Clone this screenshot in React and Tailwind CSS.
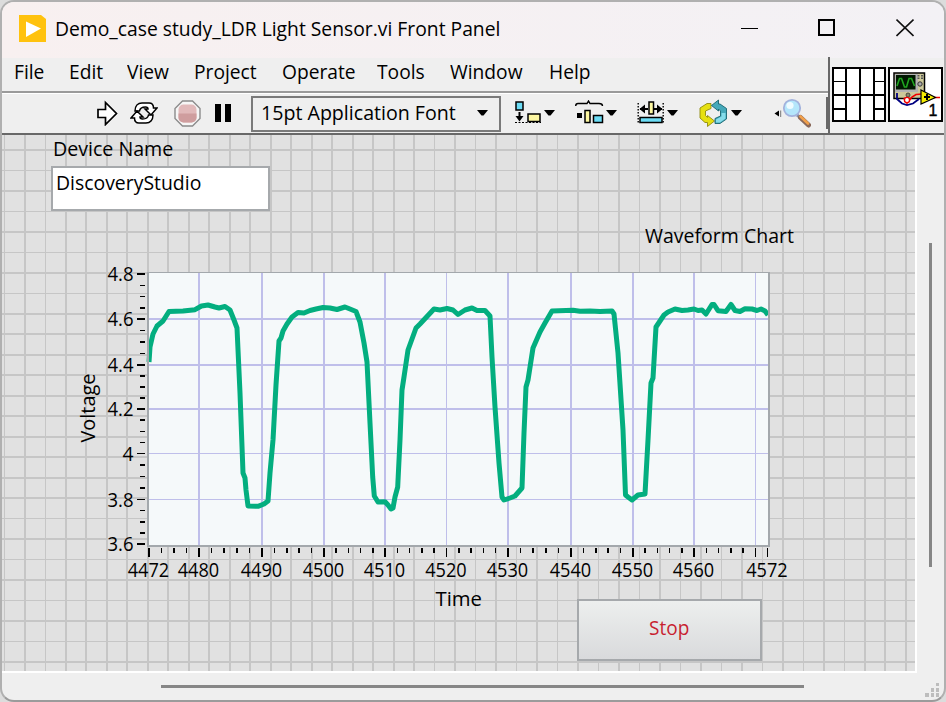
import React from 'react';
import clsx from 'clsx';

const MENU = [
  { label: 'File', width: 'w-[55px]' },
  { label: 'Edit', width: 'w-[58px]' },
  { label: 'View', width: 'w-[67px]' },
  { label: 'Project', width: 'w-[88px]' },
  { label: 'Operate', width: 'w-[95px]' },
  { label: 'Tools', width: 'w-[73px]' },
  { label: 'Window', width: 'w-[99px]' },
  { label: 'Help', width: 'w-[60px]' },
];

// value ticks of the chart, in plot pixels
const Y_TICKS = [
  { label: '4.8', y: 274 },
  { label: '4.6', y: 319 },
  { label: '4.4', y: 365 },
  { label: '4.2', y: 409 },
  { label: '4', y: 453.5 },
  { label: '3.8', y: 499.5 },
  { label: '3.6', y: 544 },
];

const X_TICKS = [
  { label: '4472', x: 149 },
  { label: '4480', x: 199 },
  { label: '4490', x: 262 },
  { label: '4500', x: 324 },
  { label: '4510', x: 385 },
  { label: '4520', x: 446.5 },
  { label: '4530', x: 508 },
  { label: '4540', x: 571 },
  { label: '4550', x: 633 },
  { label: '4560', x: 694 },
  { label: '', x: 755.5 },
  { label: '4572', x: 767.5 },
];

const TRACE = [
  [149, 362], [150, 347], [153, 334], [157, 326], [163, 321], [169, 311.5], [183, 311], [195, 309.7],
  [201.5, 306], [208, 305], [215, 307], [219, 308], [225, 306.5], [230, 310], [234, 320], [237, 328],
  [240, 393], [243, 473], [245, 478], [246, 490], [248, 506], [258, 506.3], [264, 504], [268, 501],
  [270, 473], [273, 440], [276, 385], [279, 341], [281, 338], [283, 331], [287, 324], [292, 317],
  [298, 312.5], [304, 313], [310, 310.5], [316, 309], [323, 307.5], [330, 308], [337, 309.5],
  [345, 307], [350, 309], [356, 311.5], [360, 322], [364, 343], [367, 362], [370, 423], [372.7, 477],
  [374.3, 496], [378, 502], [385, 501.7], [388, 505], [391, 509], [393, 508], [395, 497], [397.7, 487],
  [400, 440], [402, 390], [404, 377], [408, 350], [416, 328], [420, 324], [434, 309], [440, 310],
  [447, 308.5], [453, 310], [458, 314.5], [465, 310], [472, 308], [477, 310.5], [485, 310.5],
  [490, 316], [492, 357], [495, 407], [499, 463], [502, 497], [504, 500], [510, 498], [515, 496],
  [522, 488], [524, 433], [526, 387], [528, 380], [533, 348], [540, 332], [545, 323], [552, 311],
  [573, 310.3], [580, 311.3], [590, 311], [600, 311.5], [612, 311], [614, 314], [618, 353], [623, 430],
  [625.5, 495], [628, 497], [632, 500], [638, 495], [645, 494], [648, 440], [651, 383], [653, 378],
  [656, 327], [660, 321], [664, 315], [668, 312], [675, 309], [682, 310.5], [688, 310], [694, 309],
  [698, 310.5], [702, 310], [706, 314], [712, 304.5], [714, 304.5], [718, 310.7], [726, 311.5],
  [731, 304.5], [735, 310.5], [740, 311.5], [745, 308.8], [752, 309], [757, 310.5], [761, 309],
  [765, 311], [768, 315],
];

const GRID_X = Array.from({ length: 45 }, (_, i) => 4.4 + i * 20.487);
const GRID_Y = Array.from({ length: 26 }, (_, i) => 150 + i * 20.48);

const Text = ({ className, color = 'text-black', children }) => (
  <span className={clsx('inline-block whitespace-nowrap text-[20px] leading-[26px]', color, className)}>
    {children}
  </span>
);

const Caret = ({ className }) => (
  <svg className={clsx('h-[6px] w-[11px] shrink-0', className)} viewBox="0 0 11 6">
    <path d="M0 0H11L6.5 5.5H4.5Z" fill="#000" />
  </svg>
);

const TitleBar = () => (
  <div className="flex h-[57px] shrink-0 items-center bg-gradient-to-r from-[#f8f0f0] to-[#f3f1f5] pb-[3px] pl-[17px]">
    <svg className="h-[27px] w-[27px]" viewBox="0 0 27 27">
      <path d="M0 0H22L27 4V27H0Z" fill="#ffc20e" />
      <path d="M7 6.5L22 13.5L7 22Z" fill="#fff" />
    </svg>
    <Text className="ml-[9px] mt-[1px] w-[480px] origin-left scale-x-[0.965]">Demo_case study_LDR Light Sensor.vi Front Panel</Text>
    <div className="ml-auto flex items-center pr-[30px]">
      <svg className="h-[20px] w-[17px]" viewBox="0 0 17 20" shapeRendering="crispEdges">
        <path d="M0 10.5H17" stroke="#000" />
      </svg>
      <svg className="ml-[60px] h-[20px] w-[17px]" viewBox="0 0 17 20">
        <rect x="1" y="2" width="15" height="15" fill="none" stroke="#000" strokeWidth="2" />
      </svg>
      <svg className="ml-[61px] h-[20px] w-[18px]" viewBox="0 0 18 20">
        <path d="M0.5 1.5L17.5 18M17.5 1.5L0.5 18" stroke="#111" strokeWidth="1.6" />
      </svg>
    </div>
  </div>
);

const MenuBar = () => (
  <div className="flex h-[34px] items-center pb-[3px] pl-[12px]">
    {MENU.map((item) => (
      <button key={item.label} className={clsx('flex shrink-0', item.width)}>
        <Text className="origin-left scale-x-[0.96]">{item.label}</Text>
      </button>
    ))}
  </div>
);

const RunIcon = () => (
  <svg className="h-[26px] w-[21px] shrink-0" viewBox="0 0 21 26">
    <path d="M1 9.500H8.500V2.500L19.500 13.500L8.500 24.500V17.500H1Z" fill="#fff" stroke="#000" strokeWidth="1.7" />
  </svg>
);

const RunContinuousIcon = () => (
  <svg className="ml-[12px] h-[24px] w-[28px] shrink-0" viewBox="0 0 28 24">
    <path
      d="M5 10C5 5 8 2 12 2H19C22 2 23.500 4 23.500 7H27L21 14L15 8H18C18 6.500 17 6 15.500 6C12 6 10 7 9.500 10Z"
      fill="#fff" stroke="#000" strokeWidth="1.5"
    />
    <path
      d="M23 14C23 19 20 22 16 22H9C6 22 4.500 20 4.500 17H1L7 10L13 16H10C10 17.500 11 18 12.500 18C16 18 18 17 18.500 14Z"
      fill="#fff" stroke="#000" strokeWidth="1.5"
    />
  </svg>
);

const AbortIcon = () => (
  <svg className="ml-[16px] h-[27px] w-[27px] shrink-0" viewBox="0 0 27 27">
    <path d="M8.500 1H18.500L26 8.500V18.500L18.500 26H8.500L1 18.500V8.500Z" fill="#f6f6f6" stroke="#8b8b8b" strokeWidth="1.4" />
    <rect x="4.500" y="4.500" width="18" height="18" rx="5" fill="#e1b9ba" />
    <path d="M4.500 13.500H22.500V17.500A5 5 0 0 1 17.500 22.500H9.500A5 5 0 0 1 4.500 17.500Z" fill="#cf9d9e" />
  </svg>
);

const AlignIcon = () => (
  <svg className="ml-[14px] h-[26px] w-[26px] shrink-0" viewBox="0 0 26 26">
    <rect x="1" y="2" width="7" height="8" fill="#6cdcf5" stroke="#000" strokeWidth="1.500" />
    <path d="M4.500 12V18" stroke="#000" strokeWidth="2" />
    <path d="M0.500 16H8.500L4.500 21.500Z" fill="#000" />
    <rect x="13" y="14" width="12" height="7.500" fill="#fdf7a1" stroke="#000" strokeWidth="1.500" />
    <path d="M0 22.500H26" stroke="#000" strokeWidth="1.200" strokeDasharray="2 1.500" />
  </svg>
);

const DistributeIcon = () => (
  <svg className="ml-[20px] h-[26px] w-[29px] shrink-0" viewBox="0 0 29 26">
    <path d="M0.700 6C0.700 4 2 3.500 3 3.500H12L13.500 1L15 3.500H24C26 3.500 27.500 4 27.500 6" fill="none" stroke="#000" strokeWidth="1.400" />
    <rect x="2" y="13" width="5" height="5" fill="#000" />
    <rect x="10" y="10.500" width="5" height="12" fill="#fdf7a1" stroke="#000" strokeWidth="1.500" />
    <rect x="18.500" y="15.500" width="9" height="7" fill="#6cdcf5" stroke="#000" strokeWidth="1.500" />
  </svg>
);

const ResizeIcon = () => (
  <svg className="ml-[20px] h-[26px] w-[28px] shrink-0" viewBox="0 0 28 26">
    <path d="M1.200 3V24M26.200 3V24" stroke="#000" strokeWidth="1.400" strokeDasharray="1.500 1.500" />
    <path d="M3 9H11M17 9H25" stroke="#000" strokeWidth="2" />
    <path d="M2.500 9L8 4.500V13.500ZM25.500 9L20 4.500V13.500Z" fill="#000" />
    <rect x="12" y="2" width="4.500" height="12" fill="#fdf7a1" stroke="#000" strokeWidth="1.500" />
    <rect x="3" y="17.500" width="22" height="5" fill="#6cdcf5" stroke="#000" strokeWidth="1.500" />
  </svg>
);

const ReorderIcon = () => (
  <svg className="ml-[21px] h-[29px] w-[29px] shrink-0" viewBox="0 0 29 29">
    <path
      d="M12 4.500H8L1 9V19L6 23.500H8.500V27.500L15.500 22L8.500 16.500V18.500L6.500 16.500V12L12 9.500Z"
      fill="#e6e012" stroke="#8f8a10" strokeWidth="0.900"
    />
    <path
      d="M16 24.500H21L27.500 20V9.500L21 5H19.500V1L12.500 6.500L19.500 12V10L21.500 12V17L16 19.500Z"
      fill="#45a9ba" stroke="#17646f" strokeWidth="0.900"
    />
    <path d="M22.500 14H26.500V19.500L21 23.500H17V20.500L22.500 17.500Z" fill="#86dcea" />
  </svg>
);

const SearchIcon = () => (
  <svg className="ml-[32px] h-[30px] w-[37px] shrink-0" viewBox="0 0 37 30">
    <path d="M0.500 15.500L5 12.500V18.500Z" fill="#000" />
    <path d="M6.700 12.500V19" stroke="#777" />
    <path d="M23 17L27 20" stroke="#8a93a5" strokeWidth="3" />
    <path d="M26.500 19.500L34.500 27" stroke="#8a6a5c" strokeWidth="5" strokeLinecap="round" />
    <path d="M26.500 18.500L34 25.500" stroke="#f2a04a" strokeWidth="2.600" strokeLinecap="round" />
    <circle cx="18" cy="10" r="8.200" fill="#b4e6fb" stroke="#a3b2dc" strokeWidth="1.800" />
    <circle cx="16" cy="7.500" r="3.600" fill="#eefbff" />
  </svg>
);

const Toolbar = () => (
  <div className="flex h-[40px] items-center pl-[95px]">
    <RunIcon />
    <RunContinuousIcon />
    <AbortIcon />
    <div className="ml-[14px] flex gap-[4px]">
      <div className="h-[18px] w-[6px] bg-black" />
      <div className="h-[18px] w-[6px] bg-black" />
    </div>
    <div className="ml-[20px] mt-[1px] flex h-[36px] w-[250px] shrink-0 items-center justify-between border-2 border-[#7a7a7a] pb-[2px] pl-[8px] pr-[11px]">
      <Text className="w-[200px] origin-left scale-x-[0.98]">15pt Application Font</Text>
      <Caret />
    </div>
    <AlignIcon />
    <Caret className="ml-[3px]" />
    <DistributeIcon />
    <Caret className="ml-[2px]" />
    <ResizeIcon />
    <Caret className="ml-[2px]" />
    <ReorderIcon />
    <Caret className="ml-[3px]" />
    <SearchIcon />
    <div className="ml-auto h-[32px] w-[2px] shrink-0 bg-[#686868]" />
  </div>
);

const ConnectorPane = () => (
  <svg className="h-[55px] w-[54px]" viewBox="0 0 54 55" shapeRendering="crispEdges">
    <rect x="1" y="1" width="52" height="53" fill="#fff" stroke="#000" strokeWidth="2" />
    <path d="M14 0V55M28 0V55M42 0V55M0 28H54" stroke="#000" strokeWidth="2" fill="none" />
    <path d="M0 14.500H14M42 14.500H54" stroke="#000" strokeWidth="1" />
    <path d="M0 42H14M42 42H54" stroke="#000" strokeWidth="2" />
  </svg>
);

const ViIcon = () => (
  <svg className="h-[55px] w-[55px]" viewBox="0 0 55 55">
    <rect x="1" y="1" width="53" height="53" fill="#fff" stroke="#000" strokeWidth="2" />
    <rect x="6" y="6" width="30.500" height="25.500" fill="#cdc99a" stroke="#000" strokeWidth="1.500" />
    <rect x="7" y="7" width="23" height="18" fill="#b3b3b3" />
    <rect x="8" y="8" width="19.500" height="14.500" fill="#001800" />
    <path d="M9 19L11.500 11.500H13.500L16.500 20H18.500L21 11.500H23.500L26.500 19" fill="none" stroke="#1fa51f" strokeWidth="1.600" />
    <path d="M30.500 8V12M34 8V12" stroke="#555" strokeWidth="2" strokeDasharray="1.500 1" />
    <circle cx="32" cy="17" r="2.200" fill="#aaa" stroke="#333" />
    <circle cx="20" cy="28" r="2" fill="#8a8a6a" stroke="#333" strokeWidth="0.800" />
    <path d="M9 26V32L14 36.500L19 38L25 36.500L31 32" fill="none" stroke="#000080" strokeWidth="1.800" />
    <path d="M16 31L19 36L24 30L28 27.500L34 27M46 30.500H52" fill="none" stroke="#f00000" strokeWidth="1.600" />
    <circle cx="19" cy="33" r="2.600" fill="#fff" stroke="#f00000" strokeWidth="1.400" />
    <path d="M33 23L47.500 30.500L33 37Z" fill="#f6ee00" stroke="#000" strokeWidth="1.200" />
    <path d="M36 30H42M39 27V33" stroke="#000" strokeWidth="2" />
    <text x="40.500" y="49" fontSize="16" fontFamily="Liberation Sans, sans-serif" stroke="#000" strokeWidth="0.400">1</text>
  </svg>
);

const Chart = () => (
  <svg
    className="absolute left-[70px] top-[125px] h-[360px] w-[730px]"
    viewBox="72 260 730 360"
    fontFamily="Open Sans, sans-serif"
    fontSize="19.500"
  >
    <rect x="148" y="273" width="621" height="272" fill="#f5f9fa" />
    <g stroke="#bfbfea" strokeWidth="1.700" shapeRendering="crispEdges">
      {Y_TICKS.slice(1, -1).map((t) => <path key={t.y} d={`M149 ${t.y}H768`} />)}
      {X_TICKS.slice(1, -1).map((t) => <path key={t.x} d={`M${t.x} 273V545`} />)}
    </g>
    <polyline points={TRACE.map((p) => p.join(',')).join(' ')} fill="none" stroke="#03ae7f" strokeWidth="5" strokeLinejoin="round" />
    <g fill="none" stroke="#a3a8ac" shapeRendering="crispEdges">
      <path d="M148 272.500H769" strokeWidth="1" />
      <path d="M148 272V547M769 272V547M147 546H770" strokeWidth="2" />
    </g>
    {Y_TICKS.map((t, i) => (
      <g key={t.y}>
        <text x="133.500" y={t.y + 7} textAnchor="end" textLength={t.label.length > 1 ? 26 : 11} lengthAdjust="spacingAndGlyphs">
          {t.label}
        </text>
        <path d={`M137 ${t.y}H145`} stroke="#000" strokeWidth="1.700" shapeRendering="crispEdges" />
        {i < Y_TICKS.length - 1 && [0.25, 0.5, 0.75].map((f) => (
          <path
            key={f}
            d={`M140 ${t.y + f * (Y_TICKS[i + 1].y - t.y)}H145`}
            stroke="#000" strokeWidth="1.500" shapeRendering="crispEdges"
          />
        ))}
      </g>
    ))}
    {X_TICKS.map((t, i) => {
      const steps = i === 0 ? 4 : i < X_TICKS.length - 2 ? 5 : 0;
      return (
        <g key={t.x}>
          {t.label && (
            <text x={t.x - 0.5} y="576.500" textAnchor="middle" textLength="41.500" lengthAdjust="spacingAndGlyphs">{t.label}</text>
          )}
          <path d={`M${t.x} 548V557`} stroke="#000" strokeWidth="1.700" shapeRendering="crispEdges" />
          {Array.from({ length: Math.max(steps - 1, 0) }, (_, k) => (
            <path
              key={k}
              d={`M${t.x + ((k + 1) / steps) * (X_TICKS[i + 1].x - t.x)} 548V553`}
              stroke="#000" strokeWidth="1.500" shapeRendering="crispEdges"
            />
          ))}
        </g>
      );
    })}
    <text transform="translate(95 442.5) rotate(-90)" textLength="69" lengthAdjust="spacingAndGlyphs">Voltage</text>
    <text x="435.500" y="606" textLength="46.500" lengthAdjust="spacingAndGlyphs">Time</text>
  </svg>
);

const FrontPanel = () => (
  <div className="relative h-[536px] w-[913px] shrink-0 overflow-hidden bg-[#e1e1e1]">
    <svg className="absolute inset-0 h-[536px] w-[913px]" viewBox="2 135 913 536" shapeRendering="crispEdges">
      <g stroke="#c6c6c6" strokeWidth="1.700">
        {GRID_X.map((x) => <path key={x} d={`M${x} 135V671`} />)}
        {GRID_Y.map((y) => <path key={y} d={`M2 ${y}H915`} />)}
      </g>
    </svg>
    <Text className="absolute left-[51px] top-[1px] origin-left scale-x-[0.98]">Device Name</Text>
    <div className="absolute left-[49px] top-[31px] h-[45px] w-[219px] border-2 border-[#a6a9ac] bg-white pl-[3px] pt-[2px]">
      <Text className="origin-left scale-x-[0.97]">DiscoveryStudio</Text>
    </div>
    <Text className="absolute left-[643px] top-[88px] origin-left scale-x-[0.975]">Waveform Chart</Text>
    <Chart />
    <button className="absolute left-[575px] top-[464px] flex h-[62px] w-[185px] items-center justify-center border-2 border-[#a6a9ac] bg-gradient-to-b from-[#edefee] to-[#d9dadc] pb-[4px]">
      <Text className="scale-x-[0.95]" color="text-[#c81f30]">Stop</Text>
    </button>
  </div>
);

const App = () => (
  <div className="h-[702px] w-[946px] overflow-hidden bg-[#dcdcdc] font-['Open_Sans',sans-serif]">
    <div className="flex h-[702px] w-[946px] flex-col overflow-hidden rounded-[14px] border-2 border-[#b0b0b0] border-b-[#9b9b9b] bg-[#efefef]">
      <div className="-mt-[1px] flex flex-col">
        <TitleBar />
      </div>
      <div className="-mt-[1px] flex h-[78px] shrink-0 border-b-2 border-[#686868]">
        <div className="flex w-[826px] shrink-0 flex-col">
          <MenuBar />
          <div className="h-[2px] shrink-0 bg-[#9a9a9a]" />
          <div className="h-[1px] shrink-0 bg-white" />
          <Toolbar />
        </div>
        <div className="flex flex-1 items-start gap-[2px] border-l-2 border-[#686868] pl-[2px] pt-[10px]">
          <ConnectorPane />
          <ViIcon />
        </div>
      </div>
      <div className="flex shrink-0">
        <div className="border-b-2 border-r-2 border-white">
          <FrontPanel />
        </div>
        <div className="flex flex-1 pl-[12px] pt-[108px]">
          <div className="h-[324px] w-[3px] bg-[#868686]" />
        </div>
      </div>
      <div className="flex flex-1 items-start justify-between pr-[5px] pl-[159px]">
        <div className="mt-[12px] h-[3px] w-[643px] bg-[#868686]" />
        <svg className="mt-[10px] h-[14px] w-[14px] shrink-0" viewBox="0 0 14 14" fill="#bdbdbd" shapeRendering="crispEdges">
          <path d="M11 0h3v3h-3zM11 5h3v4h-3zM6 5h3v4H6zM11 10h3v4h-3zM6 10h3v4H6zM0 10h4v4H0z" />
        </svg>
      </div>
    </div>
  </div>
);

export default App;
